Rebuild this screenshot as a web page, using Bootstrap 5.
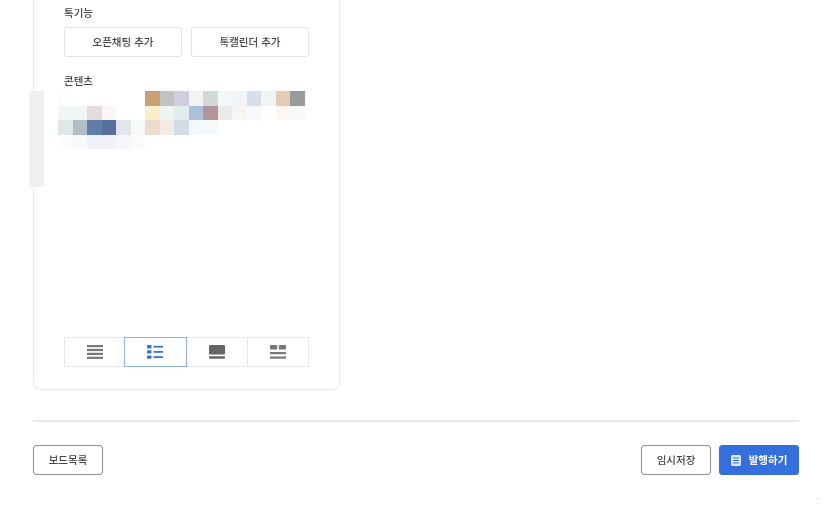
<!DOCTYPE html>
<html lang="ko">
<head>
  <meta charset="UTF-8" />
  <meta name="viewport" content="width=device-width, initial-scale=1.0"/>
  <title>게시판 설정</title>
  <link href="https://cdn.jsdelivr.net/npm/bootstrap@5.3.2/dist/css/bootstrap.min.css" rel="stylesheet">
  <style>
    html, body { height: 514px; overflow: hidden; }
    body {
      font-family: "Noto Sans CJK KR", "Noto Sans", sans-serif;
      font-size: 10.5px;
      color: #444;
      background: #fff;
    }
    .page-wrap { padding: 0 34px 0 33px; position: relative; filter: blur(.3px); }
    .side-panel {
      width: 307px;
      height: 390px;
      padding: 6px 30px 22px;
      border: 1px solid #ebebeb;
      border-top: 0;
      border-radius: 0 0 8px 8px;
      box-shadow: 0 1px 1px rgba(0,0,0,.03);
    }
    .field-label { font-size: 10.5px; font-weight: 500; line-height: 14px; color: #444; }
    .label-first { margin-bottom: 7px; }
    .label-next { margin-top: 17px; margin-bottom: 3px; }
    .add-btn {
      width: 118px;
      height: 30px;
      padding: 0;
      font-size: 10.5px;
      font-weight: 500;
      color: #444;
      border: 1px solid #e2e2e2;
      border-radius: 3px;
      background: #fff;
    }
    .thumb-area { position: relative; height: 58px; margin-left: -6px; }
    .thumb-grid { display: grid; grid-template-columns: repeat(auto-fill, 14.5px); grid-auto-rows: 14.5px; filter: blur(.3px); }
    .thumb-left { width: 87px; }
    .thumb-right { width: 160px; }
    .scroll-stub { position: absolute; left: 29px; top: 91px; width: 15px; height: 96px; background: #f0f0f0; }
    .view-btn {
      width: 61.25px;
      height: 30px;
      padding: 0;
      border: 1px solid #e8e8e8;
      border-radius: 0 !important;
      background: #fff;
      margin-left: 0 !important;
    }
    .view-btn + .view-btn { border-left: 0; }
    .view-btn.is-on { border: 1px solid #8fb2ec; position: relative; margin-left: -1px !important; width: 62.25px; }
    .view-btn.is-on + .view-btn { border-left: 0; }
    .view-btn svg { display: block; margin: 0 auto; }
    .rule-line { height: 2px; background: #e9e9e9; margin: 30px 0 23px; }
    .foot-btn {
      height: 30px;
      padding: 0;
      font-size: 10.5px;
      font-weight: 500;
      color: #444;
      background: #fff;
      border: 1px solid #8e8e8e;
      border-radius: 3px;
    }
    .foot-list { width: 70px; }
    .foot-temp { width: 70px; }
    .foot-pub { width: 80px; background: #3370de; border-color: #3370de; color: #fff; font-weight: 700; }
    .foot-pub:hover { background: #3370de; border-color: #3370de; color: #fff; }
    .stray-dot { position: absolute; left: 817px; top: 498px; width: 2px; height: 1px; background: #d5d5d5; }
  </style>
</head>
<body>

  <div class="page-wrap">
    <!-- 왼쪽 패널 -->
    <div class="side-panel d-flex flex-column">
      <div class="field-label label-first">톡기능</div>
      <div class="d-flex justify-content-between">
        <button type="button" class="btn add-btn">오픈채팅 추가</button>
        <button type="button" class="btn add-btn">톡캘린더 추가</button>
      </div>

      <div class="field-label label-next">콘텐츠</div>
      <div class="thumb-area d-flex align-items-start">
        <div class="thumb-grid thumb-left" id="thumb-left"></div>
        <div class="thumb-grid thumb-right" id="thumb-right"></div>
      </div>

      <div class="btn-group mt-auto" role="group">
        <button type="button" class="btn view-btn">
          <svg width="16" height="14" viewBox="0 0 16 14" fill="#777"><rect y="0" width="16" height="2.2"/><rect y="3.9" width="16" height="2.2"/><rect y="7.8" width="16" height="2.2"/><rect y="11.7" width="16" height="2.2"/></svg>
        </button>
        <button type="button" class="btn view-btn is-on">
          <svg width="16" height="14" viewBox="0 0 16 14" fill="#3a6fdc"><rect y="0" width="4.5" height="3.4" rx=".8"/><rect y="5.2" width="4.5" height="3.4" rx=".8"/><rect y="10.4" width="4.5" height="3.4" rx=".8"/><rect x="6.5" y=".8" width="9.5" height="1.8"/><rect x="6.5" y="6" width="9.5" height="1.8"/><rect x="6.5" y="11.2" width="9.5" height="1.8"/></svg>
        </button>
        <button type="button" class="btn view-btn">
          <svg width="16" height="14" viewBox="0 0 16 14" fill="#666"><rect y="0" width="16" height="9.6" rx="1.2"/><rect y="11.3" width="16" height="2.4" rx=".6"/></svg>
        </button>
        <button type="button" class="btn view-btn">
          <svg width="16" height="14" viewBox="0 0 16 14" fill="#777"><rect y="0" width="7.2" height="4.6" rx=".8"/><rect x="8.8" y="0" width="7.2" height="4.6" rx=".8"/><rect y="7" width="16" height="2.2"/><rect y="11.5" width="16" height="2.2"/></svg>
        </button>
      </div>
    </div>

    <div class="rule-line"></div>

    <!-- 하단 버튼 -->
    <div class="d-flex justify-content-between">
      <button type="button" class="btn foot-btn foot-list">보드목록</button>
      <div class="d-flex gap-2">
        <button type="button" class="btn foot-btn foot-temp">임시저장</button>
        <button type="button" class="btn foot-btn foot-pub d-flex align-items-center justify-content-center gap-2">
          <svg width="10" height="11" viewBox="0 0 10 11"><rect width="10" height="11" rx="1.5" fill="#dfe8fa"/><path d="M2 3h6M2 5.5h6M2 8h6" stroke="#3370de" stroke-width="1"/></svg>
          발행하기
        </button>
      </div>
    </div>
  </div>

  <div class="scroll-stub"></div>
  <div class="stray-dot"></div>

  <script>
    // 썸네일 모자이크 색상
    const thumbLeft = [
      '#fdfdfd','#fff','#fff','#fff','#fff','#fff',
      '#f0f5f6','#f3f6f6','#e6dcdb','#faf6f7','#fff','#fff',
      '#e0e7e9','#b4bec6','#5f7fa9','#5a6f9f','#e0e6ec','#f8fafa',
      '#fbfcfc','#f8f9fa','#f1f3f6','#f0f2f7','#f5f6f9','#fafbfb'
    ];
    const thumbRight = [
      '#c8a274','#c2c2c2','#cfcde3','#f3f3f3','#d0d9d8','#f3f7f8','#f2f4f7','#d6dfe9','#f1f4f3','#e4ccb4','#989c9c',
      '#fbeec9','#eff3f1','#e3eced','#a9c1da','#b39499','#e9ece8','#f8f6f4','#f5f8fc','#fff','#fcf7f3','#f6f8fa',
      '#ebdccb','#f5ece6','#d2dce6','#f4f8fc','#f5f9fc'
    ];
    function fillThumb(id, colors) {
      const box = document.getElementById(id);
      colors.forEach((c) => {
        const cell = document.createElement('div');
        cell.style.background = c;
        box.appendChild(cell);
      });
    }
    fillThumb('thumb-left', thumbLeft);
    fillThumb('thumb-right', thumbRight);
  </script>

  <script src="https://cdn.jsdelivr.net/npm/bootstrap@5.3.2/dist/js/bootstrap.bundle.min.js"></script>
</body>
</html>
